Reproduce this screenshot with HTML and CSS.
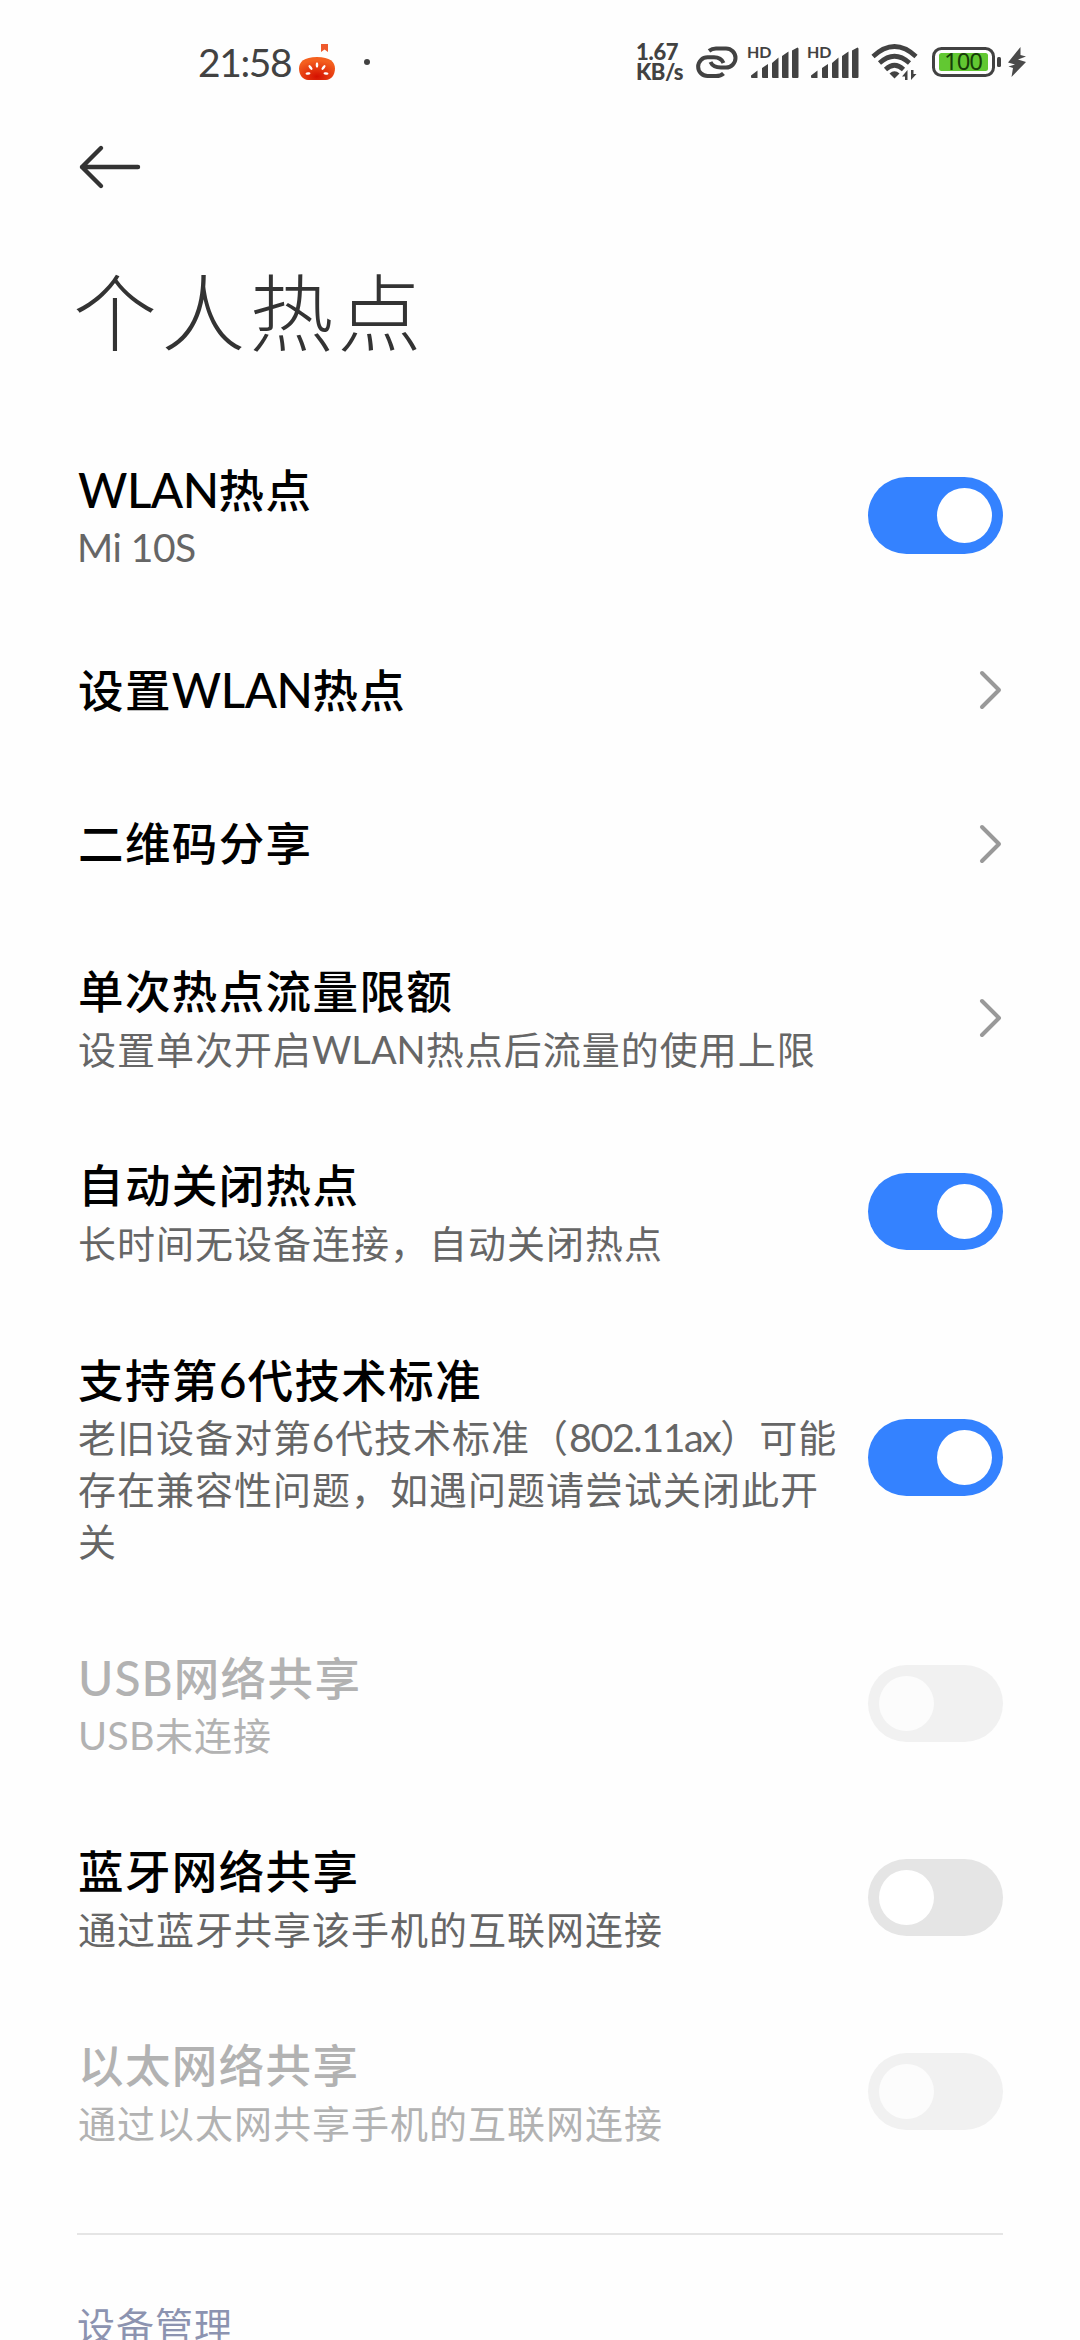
FILE: index.html
```html
<!DOCTYPE html>
<html lang="zh-CN">
<head>
<meta charset="utf-8">
<title>个人热点</title>
<link rel="stylesheet" href="styles.css">
</head>
<body>
<svg class="defs" aria-hidden="true">
  <symbol id="chevron" viewBox="0 0 24 42"><path d="M3 4L20 21L3 38" fill="none" stroke="#999" stroke-width="4" stroke-linecap="round" stroke-linejoin="round"/></symbol>
  <symbol id="bars" viewBox="0 0 50 34"><path d="M1 30.500L7.500 25.500V33H2Q1 33 1 32ZM12 23L18 19V33H13Q12 33 12 32ZM22 18L28.500 12.500V33H23Q22 33 22 32ZM32 11L38.500 6.500V33H33Q32 33 32 32ZM42 5.500L47.500 2.500Q48.500 2.500 48.500 4V32Q48.500 33 47.500 33H43Q42 33 42 32Z" fill="#424242"/></symbol>
</svg>
<div class="phone">
  <header class="status">
    <div class="status-left">
      <span class="time">21:58</span>
      <svg class="tomato" width="36" height="36" viewBox="0 0 36 36">
        <defs><radialGradient id="tg" cx=".5" cy=".85" r=".7"><stop offset="0" stop-color="#d51000"/><stop offset="1" stop-color="#f4601f"/></radialGradient></defs>
        <path d="M22 0H29V8L25.500 5.500L22 8Z" fill="#ef5a2c"/>
        <path d="M18 13C31 13 36 18 36 24.500C36 31 32 36 27 36H9C4 36 0 31 0 24.500C0 18 5 13 18 13Z" fill="url(#tg)"/>
        <g fill="#fff"><ellipse cx="18" cy="21" rx="1.300" ry="2.700"/><ellipse cx="11.500" cy="23.500" rx="1.300" ry="2.800" transform="rotate(-38 11.500 23.500)"/><ellipse cx="24.500" cy="23.500" rx="1.300" ry="2.800" transform="rotate(38 24.500 23.500)"/><ellipse cx="9" cy="29.500" rx="2.500" ry="1.200" transform="rotate(-8 9 29.500)"/><ellipse cx="27" cy="29.500" rx="2.500" ry="1.200" transform="rotate(8 27 29.500)"/></g>
      </svg>
      <span class="dot"></span>
    </div>
    <div class="status-right">
      <div class="speed"><span class="rate">1.67</span><span class="unit">KB/s</span></div>
      <svg class="link" width="44" height="34" viewBox="0 0 44 34" fill="none" stroke="#424242" stroke-width="4">
        <path d="M13 5.800Q16 3.500 20 3.500H30A9.500 9.500 0 0 1 30 22.500H25Q17 22.500 14.500 17"/>
        <path d="M27.500 18Q25 12.300 18 12.300H11.500A9.300 9.300 0 0 0 11.500 31H20Q25 31 27.500 28.500"/>
      </svg>
      <div class="signal"><span class="hd">HD</span><svg width="50" height="34"><use href="#bars"/></svg></div>
      <div class="signal"><span class="hd">HD</span><svg width="50" height="34"><use href="#bars"/></svg></div>
      <svg class="wifi" width="48" height="38" viewBox="0 0 48 38">
        <g fill="none" stroke="#424242" stroke-width="4.600"><path d="M2 13.500Q23.500-6.500 45 13.500"/><path d="M8.500 20Q23.500 6.500 38.500 20"/><path d="M14.500 26.500Q23.500 18 32.500 26.500"/></g>
        <path d="M18.500 30.500Q23.500 26 28.500 30.500L23.500 35.500Z" fill="#424242"/>
        <path d="M31 33.500L36.500 27V37H34V33.500ZM45.500 31L40 37V27H42.500V31Z" fill="#424242"/>
      </svg>
      <svg class="battery" width="95" height="34" viewBox="0 0 95 34">
        <rect x="1.500" y="3.500" width="60" height="27" rx="8" fill="none" stroke="#424242" stroke-width="3"/>
        <rect x="7" y="8" width="49" height="18" rx="2.500" fill="#62c832"/>
        <rect x="65" y="12" width="4" height="10" rx="1.500" fill="#424242"/>
        <path d="M88.500 2L76 17.500L83 19.500L76.500 21.500L81 23L79.500 32L94 17L86 14.500L94 11.500L88.500 10Z" fill="#4a4a4a"/>
        <text x="31.500" y="25" text-anchor="middle" class="percent" textLength="39">100</text>
      </svg>
    </div>
  </header>
  <nav class="nav">
    <svg width="66" height="48" viewBox="0 0 66 48" fill="none" stroke="#333" stroke-width="4.400" stroke-linecap="round" stroke-linejoin="round"><path d="M23 5L4 24L23 43M4 24H60"/></svg>
  </nav>
  <h1 class="page-title">个人热点</h1>
  <main class="list">
    <div class="row"><div class="text"><div class="name"><span class="lat">WLAN</span>热点</div><div class="desc"><span class="mi">Mi 10S</span></div></div><span class="switch on"></span></div>
    <div class="row"><div class="text"><div class="name">设置<span class="lat">WLAN</span>热点</div></div><svg class="chev" width="24" height="42"><use href="#chevron"/></svg></div>
    <div class="row"><div class="text"><div class="name">二维码分享</div></div><svg class="chev" width="24" height="42"><use href="#chevron"/></svg></div>
    <div class="row"><div class="text"><div class="name">单次热点流量限额</div><div class="desc">设置单次开启<span class="lat">WLAN</span>热点后流量的使用上限</div></div><svg class="chev" width="24" height="42"><use href="#chevron"/></svg></div>
    <div class="row"><div class="text"><div class="name">自动关闭热点</div><div class="desc">长时间无设备连接，自动关闭热点</div></div><span class="switch on"></span></div>
    <div class="row"><div class="text"><div class="name">支持第<span class="num">6</span>代技术标准</div><div class="desc">老旧设备对第<span class="num">6</span>代技术标准（<span class="std">802.11ax</span>）可能<br>存在兼容性问题，如遇问题请尝试关闭此开<br>关</div></div><span class="switch on"></span></div>
    <div class="row disabled"><div class="text"><div class="name"><span class="usb">USB</span>网络共享</div><div class="desc"><span class="usb">USB</span>未连接</div></div><span class="switch"></span></div>
    <div class="row"><div class="text"><div class="name">蓝牙网络共享</div><div class="desc">通过蓝牙共享该手机的互联网连接</div></div><span class="switch"></span></div>
    <div class="row disabled"><div class="text"><div class="name">以太网络共享</div><div class="desc">通过以太网共享手机的互联网连接</div></div><span class="switch"></span></div>
  </main>
  <section class="section"><h2 class="section-title">设备管理</h2></section>
</div>
</body>
</html>
```
FILE: styles.css
```css
* { box-sizing: border-box; }
html, body { margin: 0; overflow: hidden; }
body { background: #fefefe; color: #000; font-family: Lato, "Noto Sans CJK SC", sans-serif; }
.defs { display: none; }
svg { display: block; flex: none; }
.phone { width: 1080px; height: 2340px; overflow: hidden; display: flex; flex-direction: column; }

.status { height: 124px; flex: none; display: flex; justify-content: space-between; padding: 0 53px 0 198px; color: #424242; }
.status-left, .status-right { display: flex; align-items: center; }
.time { font-size: 39px; line-height: 46px; width: 101px; letter-spacing: -1.400px; white-space: nowrap; }
.dot { width: 6px; height: 6px; border-radius: 50%; background: #424242; margin-left: 29px; }
.speed { display: flex; flex-direction: column; width: 60px; font-size: 22px; line-height: 20px; font-weight: 900; white-space: nowrap; }
.rate { letter-spacing: -.3px; }
.unit { letter-spacing: -.5px; }
.link { margin-right: 9px; }
.signal { position: relative; width: 60px; height: 34px; }
.signal svg { margin-left: 1px; }
.hd { position: absolute; left: -2px; top: -1px; font-size: 16px; line-height: 15px; font-weight: 700; }
.wifi { margin: 0 13px 0 2px; }
.percent { font-family: "Noto Sans", sans-serif; font-size: 24px; fill: #173d08; }

.nav { height: 86px; flex: none; display: flex; align-items: center; padding-left: 78px; }
.page-title { margin: 0; height: 208px; flex: none; padding: 43px 73px 0; font-size: 84px; line-height: 120px; font-weight: 300; letter-spacing: 4.2px; color: #333; }

.list { flex: none; display: flex; flex-direction: column; }
.row { min-height: 154px; flex: none; padding: 40px 77px 40px 78px; display: flex; align-items: center; justify-content: space-between; }
.text { white-space: nowrap; margin: 1px 0 -1px; }
.name { font-size: 45.500px; line-height: 62px; height: 62px; font-weight: 500; letter-spacing: 1.400px; }
.desc { font-size: 38px; line-height: 52px; letter-spacing: 1px; color: #666; }
.name .lat { font-size: 47.500px; letter-spacing: -.5px; }
.desc .lat { letter-spacing: 0; }
.mi { font-size: 39px; letter-spacing: -.5px; margin-left: -1px; }
.name .usb { font-size: 48px; letter-spacing: 1px; }
.desc .usb { font-size: 39.500px; letter-spacing: .3px; }
.name .num { font-size: 48px; letter-spacing: 1px; }
.std { font-size: 39.500px; letter-spacing: -1.500px; }
.disabled .name, .disabled .desc { color: #b2b2b2; }
.chev { margin: 1px 0 -1px; }

.switch { width: 135px; height: 77px; border-radius: 39px; background: #e5e5e5; padding: 11px; flex: none; display: flex; }
.switch::before { content: ""; width: 55px; height: 55px; border-radius: 50%; background: #fff; }
.switch.on { background: #3482ff; justify-content: flex-end; }
.disabled .switch { background: #f1f1f1; }
.disabled .switch::before { background: #fcfcfc; }

.section { margin: 45px 77px 0; border-top: 2px solid #e5e5e5; padding-top: 64px; }
.section-title { margin: 0; font-size: 38px; line-height: 52px; font-weight: 400; letter-spacing: 1px; color: #8c93b0; white-space: nowrap; }
```
